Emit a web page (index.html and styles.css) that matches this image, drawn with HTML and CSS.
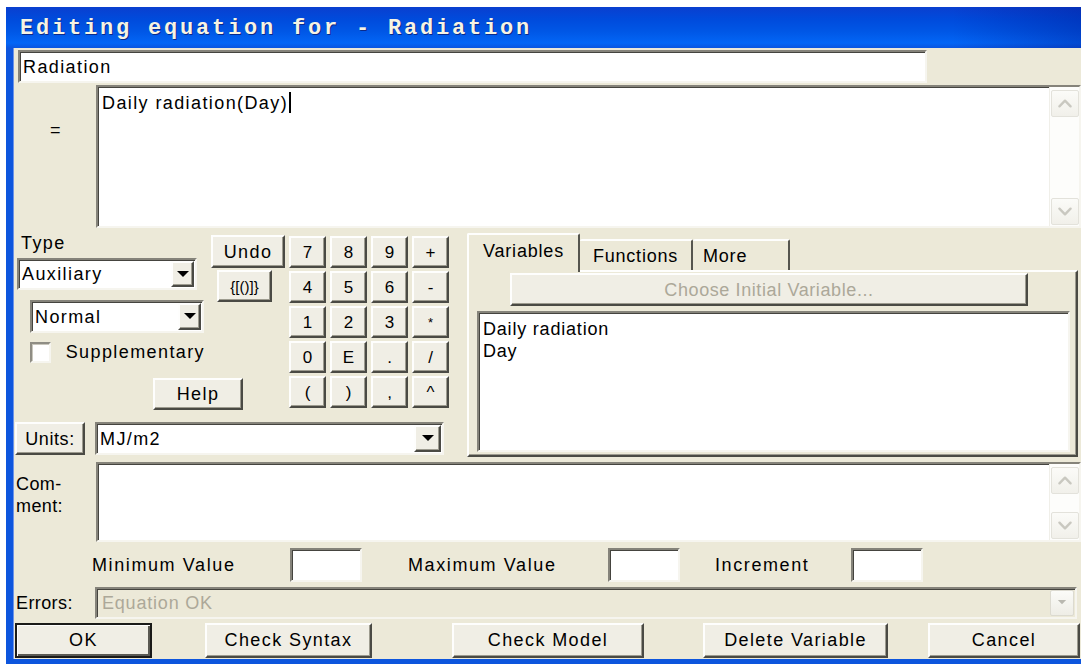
FILE: index.html
```html
<!DOCTYPE html>
<html lang="en">
<head>
<meta charset="utf-8">
<title>Editing equation for - Radiation</title>
<link rel="stylesheet" href="styles.css">
</head>
<body>
<div class="window">
  <div class="titlebar"><span class="title">Editing equation for - Radiation</span></div>

  <div class="client">
    <!-- variable name -->
    <div class="name-row">
      <div class="sunken name-field">Radiation</div>
    </div>

    <!-- equation text -->
    <div class="eq-row">
      <div class="eq-label">=</div>
      <div class="sunken memo eq-memo">
        <div class="memo-text">Daily radiation(Day)<span class="caret"></span></div>
        <div class="vscroll">
          <span class="sb-btn"><svg viewBox="0 0 28 26"><path d="M8 16 L14 10 L20 16"/></svg></span>
          <span class="sb-btn"><svg viewBox="0 0 28 26"><path d="M8 10 L14 16 L20 10"/></svg></span>
        </div>
      </div>
    </div>

    <!-- type, keypad and variable tabs -->
    <div class="mid">
      <div class="left-pane">
        <div class="controls">
          <div class="type-col">
            <div class="type-label">Type</div>
            <div class="sunken combo aux-combo">
              <span class="combo-text">Auxiliary</span>
              <span class="drop-btn"><svg viewBox="0 0 12 7"><path d="M0 0 H12 L6 6 Z"/></svg></span>
            </div>
            <div class="sunken combo normal-combo">
              <span class="combo-text">Normal</span>
              <span class="drop-btn"><svg viewBox="0 0 12 7"><path d="M0 0 H12 L6 6 Z"/></svg></span>
            </div>
            <div class="check-row"><span class="checkbox"></span><span>Supplementary</span></div>
          </div>
          <div class="edit-col">
            <button class="btn undo-btn">Undo</button>
            <button class="btn brackets-btn">{[()]}</button>
          </div>
          <div class="keypad">
            <button class="btn key">7</button><button class="btn key">8</button><button class="btn key">9</button><button class="btn key">+</button>
            <button class="btn key">4</button><button class="btn key">5</button><button class="btn key">6</button><button class="btn key">-</button>
            <button class="btn key">1</button><button class="btn key">2</button><button class="btn key">3</button><button class="btn key star">*</button>
            <button class="btn key">0</button><button class="btn key">E</button><button class="btn key">.</button><button class="btn key">/</button>
            <button class="btn key">(</button><button class="btn key">)</button><button class="btn key">,</button><button class="btn key">^</button>
          </div>
          <button class="btn help-btn">Help</button>
        </div>
        <div class="units-row">
          <button class="btn units-btn">Units:</button>
          <div class="sunken combo units-combo">
            <span class="combo-text">MJ/m2</span>
            <span class="drop-btn"><svg viewBox="0 0 12 7"><path d="M0 0 H12 L6 6 Z"/></svg></span>
          </div>
        </div>
      </div>

      <div class="tabs">
        <div class="tab-strip">
          <div class="tab active">Variables</div>
          <div class="tab">Functions</div>
          <div class="tab">More</div>
        </div>
        <div class="tab-panel">
          <button class="btn choose-btn" disabled>Choose Initial Variable...</button>
          <div class="sunken listbox">
            <div class="list-item">Daily radiation</div>
            <div class="list-item">Day</div>
          </div>
        </div>
      </div>
    </div>

    <!-- comment -->
    <div class="comment-row">
      <div class="comment-label">Com-<br>ment:</div>
      <div class="sunken memo comment-memo">
        <div class="memo-text"></div>
        <div class="vscroll">
          <span class="sb-btn"><svg viewBox="0 0 28 26"><path d="M8 16 L14 10 L20 16"/></svg></span>
          <span class="sb-btn"><svg viewBox="0 0 28 26"><path d="M8 10 L14 16 L20 10"/></svg></span>
        </div>
      </div>
    </div>

    <!-- value range -->
    <div class="range-row">
      <span class="range-label min-label">Minimum Value</span>
      <span class="sunken range-input"></span>
      <span class="range-label max-label">Maximum Value</span>
      <span class="sunken range-input"></span>
      <span class="range-label inc-label">Increment</span>
      <span class="sunken range-input"></span>
    </div>

    <!-- syntax status -->
    <div class="errors-row">
      <span class="errors-label">Errors:</span>
      <div class="sunken combo errors-combo">
        <span class="combo-text">Equation OK</span>
        <span class="drop-btn themed"><svg viewBox="0 0 12 7"><path d="M1 0 H11 L6 5 Z"/></svg></span>
      </div>
    </div>

    <!-- dialog actions -->
    <div class="button-row">
      <button class="btn action ok-btn">OK</button>
      <button class="btn action syntax-btn">Check Syntax</button>
      <button class="btn action model-btn">Check Model</button>
      <button class="btn action delete-btn">Delete Variable</button>
      <button class="btn action cancel-btn">Cancel</button>
    </div>
  </div>
</div>
</body>
</html>
```

FILE: styles.css
```css
* { box-sizing: border-box; }

html, body {
  margin: 0;
  padding: 0;
  background: #ffffff;
}

body {
  font-family: "Liberation Sans", Arial, sans-serif;
  font-size: 18px;
  letter-spacing: 1.4px;
  color: #000;
  overflow: hidden;
}

button {
  font: inherit;
  letter-spacing: inherit;
  color: inherit;
  padding: 0;
  margin: 0;
}

/* ---------- window frame ---------- */
.window {
  margin: 7px 0 0 6px;
  width: 1075px;
}

.titlebar {
  height: 41px;
  display: flex;
  align-items: center;
  padding-left: 14px;
  background:
    linear-gradient(90deg, rgba(0, 20, 120, 0) 0%, rgba(0, 20, 120, 0) 88%, rgba(0, 20, 140, 0.35) 100%),
    linear-gradient(180deg, #0a3fcf 0%, #004bdc 30%, #0057e6 60%, #0366f6 88%, #0a55e0 100%);
}

.title {
  font-family: "Liberation Mono", "Courier New", monospace;
  font-weight: bold;
  font-size: 22px;
  letter-spacing: 2.8px;
  color: #f6f3e4;
  text-shadow: 1px 1px 0 #0a2a8a;
  margin-top: 1px;
}

.client {
  height: 616px;
  background: #ece9d8;
  border-left: 7px solid #0d55dd;
  border-bottom: 5px solid #0d55dd;
  box-shadow: inset 1px 0 0 #6c93e8;
}

/* ---------- 3D borders ---------- */
.sunken {
  background: #fff;
  border: 2px solid;
  border-color: #85837a #f6f5ef #f6f5ef #85837a;
  box-shadow: inset 1px 1px 0 #45443f;
}

.btn {
  background: #f0eee5;
  border: 2px solid;
  border-color: #fefefd #4a4a44 #4a4a44 #fefefd;
  box-shadow: inset -1px -1px 0 #9d9b8f;
  display: flex;
  align-items: center;
  justify-content: center;
  line-height: 1;
}

/* ---------- name + equation ---------- */
.name-row {
  height: 37px;
  padding: 2px 0 0 5px;
}

.name-field {
  width: 909px;
  height: 33px;
  padding: 5px 0 0 3px;
  line-height: 20px;
}

.eq-row {
  height: 143px;
  display: flex;
}

.eq-label {
  width: 83px;
  padding: 35px 0 0 37px;
}

.memo {
  display: flex;
}

.eq-memo {
  width: 985px;
  height: 143px;
}

.memo-text {
  flex: 1;
  padding: 5px 0 0 4px;
  line-height: 20px;
}

.caret {
  display: inline-block;
  width: 2px;
  height: 21px;
  background: #000;
  vertical-align: -4px;
  margin-left: 1px;
}

.vscroll {
  width: 30px;
  display: flex;
  flex-direction: column;
  justify-content: space-between;
  padding: 3px 1px 1px 1px;
  background: #fdfdfb;
  border-left: 1px solid #f0efe9;
}

.sb-btn {
  display: block;
  width: 28px;
  height: 27px;
  border: 1px solid #e3e2db;
  border-radius: 2px;
  background: linear-gradient(180deg, #fbfbf8 0%, #f1f0ea 100%);
}

.sb-btn svg {
  display: block;
  width: 26px;
  height: 25px;
}

.sb-btn path {
  fill: none;
  stroke: #c9c8c0;
  stroke-width: 2.6;
  stroke-linecap: round;
  stroke-linejoin: round;
}

/* ---------- middle section ---------- */
.mid {
  height: 233px;
  display: flex;
}

.left-pane {
  width: 454px;
  padding-top: 8px;
}

.controls {
  display: grid;
  grid-template-columns: 192px 82px 166px;
  grid-template-rows: 142px 34px;
}

.type-col {
  grid-column: 1;
  grid-row: 1;
  margin-top: -3px;
}

.type-label {
  height: 20px;
  line-height: 20px;
  padding-left: 8px;
}

.combo {
  display: flex;
  align-items: center;
}

.combo-text {
  flex: 1;
  padding-left: 3px;
  line-height: 20px;
}

.drop-btn {
  width: 23px;
  height: calc(100% - 2px);
  margin-right: 1px;
  background: #f0eee5;
  border: 2px solid;
  border-color: #fefefd #4a4a44 #4a4a44 #fefefd;
  box-shadow: inset -1px -1px 0 #9d9b8f;
  display: flex;
  align-items: center;
  justify-content: center;
}

.drop-btn svg {
  width: 12px;
  height: 7px;
  fill: #000;
}

.aux-combo {
  margin: 5px 0 0 4px;
  width: 180px;
  height: 32px;
}

.normal-combo {
  margin: 10px 0 0 17px;
  width: 174px;
  height: 33px;
}

.check-row {
  margin: 9px 0 0 17px;
  display: flex;
  align-items: center;
  gap: 15px;
}

.checkbox {
  width: 22px;
  height: 21px;
  background: #fff;
  border: 2px solid;
  border-color: #8f8d84 #f6f5ef #f6f5ef #8f8d84;
  box-shadow: inset 1px 1px 0 #c9c7bd;
}

.edit-col {
  grid-column: 2;
  grid-row: 1;
}

.undo-btn {
  margin: -1px 0 0 6px;
  width: 74px;
  height: 33px;
}

.brackets-btn {
  margin: 2px 0 0 12px;
  width: 55px;
  height: 32px;
  font-size: 15px;
  letter-spacing: 0;
}

.keypad {
  grid-column: 3;
  grid-row: 1 / 3;
  margin-left: 2px;
  display: grid;
  grid-template-columns: repeat(4, 37px);
  grid-auto-rows: 32px;
  column-gap: 4px;
  row-gap: 3px;
}

.key {
  font-size: 17px;
  letter-spacing: 0;
}

.key.star {
  font-size: 13px;
  align-items: flex-start;
  padding-top: 8px;
}

.help-btn {
  grid-column: 1 / 3;
  grid-row: 2;
  justify-self: end;
  margin-right: 44px;
  width: 90px;
  height: 32px;
}

.units-row {
  margin-top: 10px;
  display: flex;
  align-items: center;
}

.units-btn {
  margin-left: 2px;
  width: 70px;
  height: 33px;
  letter-spacing: 0.6px;
}

.units-combo {
  margin-left: 10px;
  width: 349px;
  height: 33px;
}

.units-combo .drop-btn {
  width: 27px;
}

/* ---------- tabs ---------- */
.tabs {
  width: 611px;
  padding-top: 5px;
  display: flex;
  flex-direction: column;
}

.tab-strip {
  height: 37px;
  display: flex;
  align-items: flex-end;
  position: relative;
  z-index: 1;
}

.tab {
  height: 31px;
  padding: 5px 0 0 0;
  text-align: center;
  border-left: 2px solid #fefefd;
  border-top: 2px solid #fefefd;
  border-right: 2px solid #55554e;
  border-radius: 2px 2px 0 0;
  background: #ece9d8;
  line-height: 20px;
  letter-spacing: 0.8px;
}

.tab.active {
  width: 113px;
  height: 39px;
  margin-bottom: -2px;
  padding-top: 6px;
}

.tab:nth-child(2) {
  width: 113px;
  border-left: none;
}

.tab:nth-child(3) {
  width: 97px;
  border-left: none;
  text-align: left;
  padding-left: 10px;
}

.tab-panel {
  height: 187px;
  border: 2px solid;
  border-color: #fefefd #4a4a44 #4a4a44 #fefefd;
  box-shadow: inset -1px -1px 0 #9d9b8f;
  padding-top: 1px;
}

.choose-btn {
  margin-left: 41px;
  width: 518px;
  height: 33px;
  color: #aca899;
  letter-spacing: 0.6px;
}

.listbox {
  margin: 5px 0 0 8px;
  width: 593px;
  height: 141px;
  padding: 5px 0 0 4px;
}

.list-item {
  line-height: 22px;
  letter-spacing: 0.8px;
}

/* ---------- comment ---------- */
.comment-row {
  height: 84px;
  display: flex;
  padding-top: 1px;
}

.comment-label {
  width: 83px;
  padding: 11px 0 0 3px;
  line-height: 22px;
  letter-spacing: 0.4px;
}

.comment-memo {
  width: 985px;
  height: 80px;
}

/* ---------- range ---------- */
.range-row {
  height: 40px;
  display: flex;
  align-items: center;
  padding-left: 79px;
}

.range-label {
  display: block;
  letter-spacing: 1.6px;
}

.min-label { width: 198px; }
.max-label { width: 246px; padding-left: 46px; }
.inc-label { width: 171px; padding-left: 35px; }

.range-input {
  display: block;
  width: 72px;
  height: 34px;
  background: #fff;
}

/* ---------- errors ---------- */
.errors-row {
  height: 36px;
  display: flex;
  align-items: center;
}

.errors-label {
  width: 82px;
  padding-left: 3px;
  letter-spacing: 0.4px;
}

.errors-combo {
  width: 982px;
  height: 32px;
  background: #ece9d8;
}

.errors-combo .combo-text {
  color: #aca899;
  padding-left: 5px;
  letter-spacing: 0.8px;
}

.drop-btn.themed {
  width: 24px;
  border: 1px solid #dcdad0;
  box-shadow: none;
  border-radius: 2px;
  background: linear-gradient(180deg, #fbfbf8, #eeede6);
}

.drop-btn.themed svg {
  width: 10px;
  height: 6px;
  fill: #b9b8b0;
}

/* ---------- actions ---------- */
.button-row {
  height: 38px;
  display: flex;
  align-items: center;
  padding-left: 2px;
}

.action {
  height: 35px;
}

.ok-btn {
  width: 137px;
  border-color: #1a1a18;
  box-shadow: inset 1px 1px 0 #fefefd, inset -2px -2px 0 #5a5952;
}

.syntax-btn { width: 167px; margin-left: 53px; }
.model-btn  { width: 192px; margin-left: 80px; }
.delete-btn { width: 185px; margin-left: 59px; }
.cancel-btn { width: 152px; margin-left: 40px; }
```
